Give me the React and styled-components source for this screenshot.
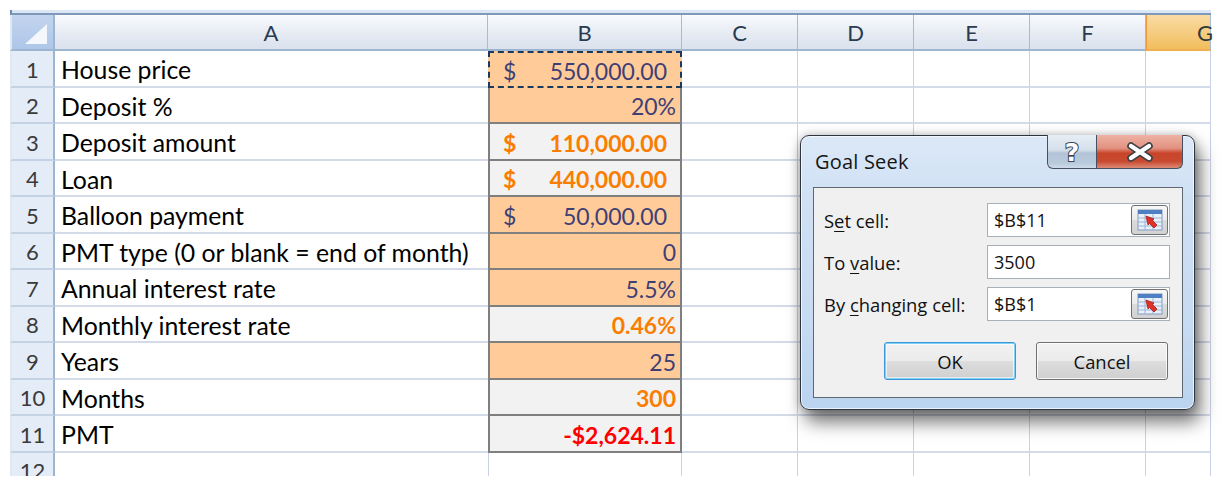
import React from "react";
import styled, { createGlobalStyle, css } from "styled-components";

const GlobalStyle = createGlobalStyle`
  html, body { margin: 0; padding: 0; background: #ffffff; }
  body { overflow: hidden; }
  * { box-sizing: border-box; }
`;

const Page = styled.div`
  position: relative;
  width: 1223px;
  height: 476px;
  padding: 10px 12px 0 10px;
  overflow: hidden;
  background: #ffffff;
`;

const TopStrip = styled.div`
  height: 5px;
  background: #dce7f5;
  border-bottom: 2px solid #7d98b8;
  border-left: 2px solid #6f8aab;
`;

const Sheet = styled.div`
  display: grid;
  grid-template-columns: 45px 433px 194px 116px 116px 116px 116px 65px;
  grid-template-rows: 36px;
  grid-auto-rows: 36.5px;
  font-family: Lato, "Liberation Sans", sans-serif;
`;

const Corner = styled.div`
  position: relative;
  background: linear-gradient(#c3d5ee, #aec6e8);
  border-right: 2px solid #9eb5cf;
  border-bottom: 2px solid #9eb5cf;
  border-left: 2px solid #dfe8f5;
  &::after {
    content: "";
    position: absolute;
    right: 6px;
    bottom: 5px;
    width: 0;
    height: 0;
    border-left: 22px solid transparent;
    border-bottom: 20px solid #f4f7fb;
  }
`;

const ColHeader = styled.div`
  display: flex;
  align-items: center;
  justify-content: ${(p) => (p.$edge ? "flex-start" : "center")};
  padding-left: ${(p) => (p.$edge ? "50px" : "0")};
  font-size: 22px;
  color: #2a3b50;
  border-bottom: 2px solid #9eb5cf;
  border-right: 1px solid #a9bbd2;
  background: linear-gradient(#f9fbfd, #e6ebf3 55%, #dbe2ed);
  ${(p) =>
    p.$selected &&
    css`
      background: linear-gradient(#f9dba4, #f5cb7e 55%, #f1bd5c);
      border-left: 1px solid #f0993a;
      border-bottom: 2px solid #f0b050;
      color: #2f3b3b;
    `}
`;

const RowHeader = styled.div`
  display: flex;
  align-items: center;
  justify-content: center;
  padding-top: 2px;
  font-size: 22px;
  color: #3a3a3a;
  background: #e4ecf7;
  border-right: 2px solid #9eb5cf;
  border-bottom: 2px solid #c5d2e4;
  border-left: 2px solid #dfe8f5;
`;

const kindStyles = {
  input: css`
    background: #ffcc99;
    color: #3f3f76;
  `,
  calc: css`
    background: #f2f2f2;
    color: #fa7d00;
    font-weight: 700;
  `,
  output: css`
    background: #f2f2f2;
    color: #ff0000;
    font-weight: 700;
  `,
};

const Cell = styled.div`
  display: flex;
  align-items: center;
  padding: 3px 6px 0;
  font-size: 24.8px;
  color: #000;
  white-space: nowrap;
  overflow: visible;
  border-bottom: 2px solid #d4dbe8;
  border-right: ${(p) => (p.$noRight ? "none" : "1px solid #c9d2e5")};
`;

const ValueCell = styled(Cell)`
  font-size: 23px;
  justify-content: ${(p) => (p.$acc ? "space-between" : "flex-end")};
  padding: 3px ${(p) => (p.$acc ? "13px" : "4px")} 0 ${(p) => (p.$acc ? "13px" : "6px")};
  border-left: 2px solid #7f7f7f;
  border-right: 2px solid #7f7f7f;
  border-bottom: 2px solid #7f7f7f;
  ${(p) => kindStyles[p.$kind]}
  ${(p) =>
    p.$selected &&
    css`
      border: 2px dashed #1b3a5e;
    `}
`;

const BlankB = styled(Cell)`
  border-left: 1px solid #c9d2e5;
  border-right: 1px solid #c9d2e5;
`;

/* ---------- Dialog ---------- */

const Dialog = styled.div`
  position: absolute;
  left: 800px;
  top: 135px;
  width: 395px;
  height: 275px;
  border: 1px solid #2e3440;
  border-radius: 9px;
  background: linear-gradient(#dbe8f7, #cfe0f4 25%, #c6daf1 70%, #bad3ee);
  box-shadow: inset 0 0 0 1px rgba(255, 255, 255, 0.7),
    5px 12px 18px rgba(0, 0, 0, 0.55), 0 0 10px rgba(0, 0, 0, 0.25);
  display: flex;
  flex-direction: column;
  font-family: "Open Sans", "Noto Sans", sans-serif;
`;

const TitleBar = styled.div`
  height: 51px;
  display: flex;
  justify-content: space-between;
  align-items: flex-start;
  padding: 0 11px 0 14px;
`;

const Title = styled.div`
  padding-top: 12px;
  font-size: 20px;
  color: #151515;
  letter-spacing: 0.2px;
`;

const TitleButtons = styled.div`
  display: flex;
  margin-top: -1px;
`;

const CaptionButton = styled.div`
  width: ${(p) => (p.$close ? "86px" : "50px")};
  height: 34px;
  display: flex;
  align-items: center;
  justify-content: center;
  border: 1px solid #47505e;
  border-top: none;
  ${(p) =>
    p.$close
      ? css`
          border-left: none;
          border-bottom-right-radius: 6px;
          background: linear-gradient(#eeb2a4, #e29180 40%, #c8452b 55%, #c84a30 80%, #dc8a76);
        `
      : css`
          border-bottom-left-radius: 6px;
          background: linear-gradient(#e6edf5, #d6e0eb 45%, #b3c4d8 55%, #b9cadc 85%, #cddbea);
        `}
`;

const Panel = styled.div`
  flex: 1;
  margin: 0 11px 11px 12px;
  background: #f0f0f0;
  border: 1px solid #5d6874;
  padding: 15px 12px 0 10px;
  display: flex;
  flex-direction: column;
`;

const FieldGrid = styled.div`
  display: grid;
  grid-template-columns: 1fr 183px;
  grid-auto-rows: 34px;
  row-gap: 8px;
  align-items: center;
`;

const Label = styled.div`
  font-size: 18.4px;
  color: #111;
  u {
    text-decoration-thickness: 1px;
    text-underline-offset: 3px;
  }
`;

const InputBox = styled.div`
  height: 34px;
  display: flex;
  align-items: center;
  justify-content: space-between;
  background: #fff;
  border: 1px solid #a9afb8;
  padding: 0 1px 0 6px;
  font-size: 18px;
  color: #111;
`;

const Picker = styled.div`
  width: 37px;
  height: 30px;
  display: flex;
  align-items: center;
  justify-content: center;
  border: 1px solid #707070;
  border-radius: 3px;
  background: linear-gradient(#f7f7f7, #ebebeb 50%, #dcdcdc 51%, #d2d2d2);
`;

const ButtonRow = styled.div`
  display: flex;
  justify-content: flex-end;
  gap: 20px;
  margin-top: 21px;
  padding-right: 2px;
`;

const Button = styled.div`
  width: 132px;
  height: 38px;
  display: flex;
  align-items: center;
  justify-content: center;
  font-size: 18.4px;
  color: #111;
  border-radius: 3px;
  border: 1px solid ${(p) => (p.$default ? "#3c97d9" : "#707070")};
  background: linear-gradient(#f2f2f2, #ebebeb 50%, #dddddd 51%, #cfcfcf);
  box-shadow: ${(p) =>
    p.$default
      ? "inset 0 0 0 1px #7fd0f6, inset 0 0 0 2px rgba(255,255,255,0.6)"
      : "inset 0 0 0 1px rgba(255,255,255,0.8)"};
`;

const HelpGlyph = () => (
  <svg width="24" height="28" viewBox="0 0 24 28">
    <text
      x="12"
      y="23"
      textAnchor="middle"
      fontFamily="'DejaVu Sans', sans-serif"
      fontWeight="700"
      fontSize="25"
      fill="#ffffff"
      stroke="#3c434d"
      strokeWidth="2"
      paintOrder="stroke"
    >
      ?
    </text>
  </svg>
);

const CloseGlyph = () => (
  <svg width="30" height="20" viewBox="0 0 30 20">
    <path d="M6 4 L24 16 M24 4 L6 16" stroke="#3a3f46" strokeWidth="7.5" strokeLinecap="round" />
    <path d="M6 4 L24 16 M24 4 L6 16" stroke="#ffffff" strokeWidth="4.4" strokeLinecap="round" />
  </svg>
);

const PickerIcon = () => (
  <svg width="26" height="22" viewBox="0 0 26 22">
    <rect x="1" y="1" width="24" height="20" fill="#e8f0fa" stroke="#7f9bbf" strokeWidth="1" />
    <rect x="1" y="1" width="24" height="4" fill="#4f7fc2" />
    <path d="M1 9 H25 M1 13 H25 M1 17 H25" stroke="#9db4d6" strokeWidth="1" />
    <path d="M8 5 V21 M16 5 V21" stroke="#9db4d6" strokeWidth="1" />
    <path d="M9 7 L17 10 L15.5 11.5 L20 16 L17 19 L12.5 14.5 L11 16 Z" fill="#e0322a" stroke="#a51d16" strokeWidth="0.8" />
  </svg>
);

const rows = [
  { n: 1, label: "House price", kind: "input", acc: true, value: "550,000.00", selected: true },
  { n: 2, label: "Deposit %", kind: "input", value: "20%" },
  { n: 3, label: "Deposit amount", kind: "calc", acc: true, value: "110,000.00" },
  { n: 4, label: "Loan", kind: "calc", acc: true, value: "440,000.00" },
  { n: 5, label: "Balloon payment", kind: "input", acc: true, value: "50,000.00" },
  { n: 6, label: "PMT type (0 or blank = end of month)", kind: "input", value: "0" },
  { n: 7, label: "Annual interest rate", kind: "input", value: "5.5%" },
  { n: 8, label: "Monthly interest rate", kind: "calc", value: "0.46%" },
  { n: 9, label: "Years", kind: "input", value: "25" },
  { n: 10, label: "Months", kind: "calc", value: "300" },
  { n: 11, label: "PMT", kind: "output", value: "-$2,624.11" },
];

const columns = ["A", "B", "C", "D", "E", "F", "G"];

export default function App() {
  return (
    <>
      <GlobalStyle />
      <Page>
        <TopStrip />
        <Sheet>
          <Corner />
          {columns.map((c) => (
            <ColHeader key={c} $selected={c === "G"} $edge={c === "G"}>
              {c}
            </ColHeader>
          ))}
          {rows.map((r) => (
            <React.Fragment key={r.n}>
              <RowHeader>{r.n}</RowHeader>
              <Cell $noRight>{r.label}</Cell>
              <ValueCell $kind={r.kind} $acc={r.acc} $selected={r.selected}>
                {r.acc ? (
                  <>
                    <span>$</span>
                    <span>{r.value}</span>
                  </>
                ) : (
                  r.value
                )}
              </ValueCell>
              <Cell />
              <Cell />
              <Cell />
              <Cell />
              <Cell />
            </React.Fragment>
          ))}
          <RowHeader>12</RowHeader>
          <Cell $noRight />
          <BlankB />
          <Cell />
          <Cell />
          <Cell />
          <Cell />
          <Cell />
        </Sheet>

        <Dialog>
          <TitleBar>
            <Title>Goal Seek</Title>
            <TitleButtons>
              <CaptionButton>
                <HelpGlyph />
              </CaptionButton>
              <CaptionButton $close>
                <CloseGlyph />
              </CaptionButton>
            </TitleButtons>
          </TitleBar>
          <Panel>
            <FieldGrid>
              <Label>
                S<u>e</u>t cell:
              </Label>
              <InputBox>
                <span>$B$11</span>
                <Picker>
                  <PickerIcon />
                </Picker>
              </InputBox>
              <Label>
                To <u>v</u>alue:
              </Label>
              <InputBox>
                <span>3500</span>
              </InputBox>
              <Label>
                By <u>c</u>hanging cell:
              </Label>
              <InputBox>
                <span>$B$1</span>
                <Picker>
                  <PickerIcon />
                </Picker>
              </InputBox>
            </FieldGrid>
            <ButtonRow>
              <Button $default>OK</Button>
              <Button>Cancel</Button>
            </ButtonRow>
          </Panel>
        </Dialog>
      </Page>
    </>
  );
}
